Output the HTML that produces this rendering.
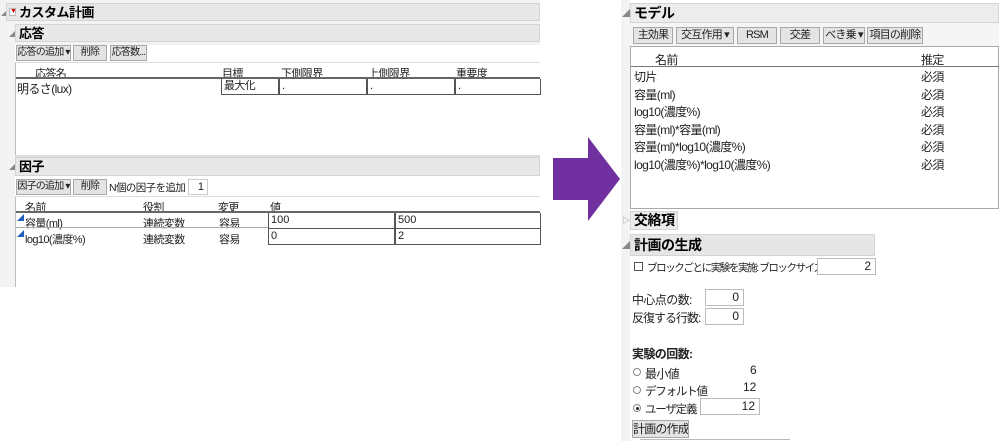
<!DOCTYPE html>
<html><head><meta charset="utf-8"><style>
*{margin:0;padding:0;box-sizing:border-box}
body{width:999px;height:441px;background:#fff;position:relative;overflow:hidden;font-family:"Liberation Sans","Noto Sans CJK JP",sans-serif;font-size:11px;color:#222}
div{white-space:nowrap}
.a{position:absolute;white-space:nowrap}
.hdr{position:absolute;background:#e8e8e8;border:1px solid #d4d4d4;font-weight:bold;font-size:13px;padding-left:3px;line-height:17px;color:#000;letter-spacing:-0.5px}
.btn{position:absolute;background:#e4e4e4;border:1px solid #a8a8a8;font-size:10px;line-height:14px;text-align:center;color:#222;letter-spacing:-0.8px;overflow:hidden}
.box{position:absolute;background:#fff;border:1px solid #999}
.tri{position:absolute;font-size:8px;color:#888}
.ln{position:absolute;height:2px;background:#666}
.cell{position:absolute;border:1px solid #555;border-top:none;height:16px;padding-left:2px;line-height:15px}
.c{letter-spacing:-0.6px}
</style></head><body>
<!-- LEFT -->
<div class="a" style="left:0;top:0;width:540px;height:287px;background:#f3f3f3"></div>
<div class="a" style="left:15px;top:45px;width:525px;height:242px;background:#fff"></div>
<div class="tri" style="left:1px;top:7px">◢</div>
<div class="hdr" style="left:6px;top:3px;width:534px;height:18px;padding-left:12px">カスタム計画</div>
<div class="a" style="left:9px;top:8px;width:7px;height:8px;background:#fff;border:1px solid #bbb"></div>
<div class="a" style="left:10px;top:8px;font-size:7px;color:#d00">▼</div>
<div class="tri" style="left:9px;top:28px">◢</div>
<div class="hdr" style="left:15px;top:24px;width:525px;height:18px">応答</div>
<div class="btn" style="left:16px;top:45px;width:55px;height:16px">応答の追加 ▾</div>
<div class="btn" style="left:73px;top:45px;width:34px;height:16px">削除</div>
<div class="btn" style="left:110px;top:45px;width:37px;height:16px">応答数...</div>
<div class="a" style="left:15px;top:62px;width:1px;height:94px;background:#bbb"></div>
<div class="a" style="left:15px;top:62px;width:525px;height:1px;background:#ddd"></div>
<div class="a c" style="left:35px;top:65px">応答名</div>
<div class="a c" style="left:222px;top:65px">目標</div>
<div class="a c" style="left:281px;top:65px">下側限界</div>
<div class="a c" style="left:368px;top:65px">上側限界</div>
<div class="a c" style="left:456px;top:65px">重要度</div>
<div class="ln" style="left:16px;top:77px;width:524px"></div>
<div class="a c" style="left:17px;top:80px;font-size:12px">明るさ(lux)</div>
<div class="cell c" style="left:221px;top:79px;width:58px">最大化</div>
<div class="cell" style="left:279px;top:79px;width:88px">.</div>
<div class="cell" style="left:367px;top:79px;width:88px">.</div>
<div class="cell" style="left:455px;top:79px;width:86px">.</div>
<div class="a" style="left:15px;top:155px;width:525px;height:2px;background:#ddd"></div>
<div class="tri" style="left:9px;top:161px">◢</div>
<div class="hdr" style="left:15px;top:157px;width:525px;height:19px">因子</div>
<div class="btn" style="left:16px;top:179px;width:55px;height:16px">因子の追加 ▾</div>
<div class="btn" style="left:73px;top:179px;width:34px;height:16px">削除</div>
<div class="a c" style="left:109px;top:180px;font-size:10.5px">N個の因子を追加</div>
<div class="box" style="left:188px;top:179px;width:20px;height:16px;text-align:right;padding-right:3px;line-height:14px;border-color:#ccc">1</div>
<div class="a" style="left:15px;top:196px;width:1px;height:91px;background:#bbb"></div>
<div class="a" style="left:15px;top:196px;width:525px;height:1px;background:#ddd"></div>
<div class="a c" style="left:25px;top:199px">名前</div>
<div class="a c" style="left:143px;top:199px">役割</div>
<div class="a c" style="left:218px;top:199px">変更</div>
<div class="a c" style="left:270px;top:199px">値</div>
<div class="ln" style="left:16px;top:211px;width:524px"></div>
<div class="a" style="left:17px;top:213px;font-size:7px;color:#2060c0">◢</div>
<div class="a c" style="left:25px;top:215px">容量(ml)</div>
<div class="a c" style="left:143px;top:215px">連続変数</div>
<div class="a c" style="left:219px;top:215px">容易</div>
<div class="cell" style="left:268px;top:213px;width:127px">100</div>
<div class="cell" style="left:395px;top:213px;width:146px">500</div>
<div class="a" style="left:16px;top:227px;width:252px;height:1px;background:#aaa"></div>
<div class="a" style="left:17px;top:229px;font-size:7px;color:#2060c0">◢</div>
<div class="a c" style="left:25px;top:231px">log10(濃度%)</div>
<div class="a c" style="left:143px;top:231px">連続変数</div>
<div class="a c" style="left:219px;top:231px">容易</div>
<div class="cell" style="left:268px;top:229px;width:127px">0</div>
<div class="cell" style="left:395px;top:229px;width:146px">2</div>

<!-- ARROW -->
<svg class="a" style="left:550px;top:135px" width="75" height="90"><polygon points="3,23 38,23 38,2 70,44 38,86 38,65 3,65" fill="#7030a0"/></svg>

<!-- RIGHT -->
<div class="a" style="left:621px;top:0;width:9px;height:441px;background:#f3f3f3"></div>
<div class="tri" style="left:622px;top:8px">◢</div>
<div class="hdr" style="left:630px;top:3px;width:369px;height:20px;font-size:14px;line-height:18px;background:#ececec">モデル</div>
<div class="a" style="left:630px;top:23px;width:369px;height:23px;background:#f5f5f5"></div>
<div class="btn" style="left:633px;top:27px;width:40px;height:17px;font-size:11px">主効果</div>
<div class="btn" style="left:676px;top:27px;width:58px;height:17px;font-size:11px">交互作用 ▾</div>
<div class="btn" style="left:737px;top:27px;width:40px;height:17px;font-size:11px">RSM</div>
<div class="btn" style="left:780px;top:27px;width:40px;height:17px;font-size:11px">交差</div>
<div class="btn" style="left:823px;top:27px;width:42px;height:17px;font-size:11px">べき乗 ▾</div>
<div class="btn" style="left:867px;top:27px;width:56px;height:17px;font-size:11px">項目の削除</div>
<div class="box" style="left:630px;top:46px;width:369px;height:163px;border-color:#aaa"></div>
<div class="a c" style="left:655px;top:51px;font-size:12px">名前</div>
<div class="a c" style="left:921px;top:51px;font-size:12px">推定</div>
<div class="ln" style="left:631px;top:66px;width:368px;height:1px;background:#777"></div>
<div class="a c" style="left:634px;top:69px;font-size:12px;line-height:17.6px">切片<br>容量(ml)<br>log10(濃度%)<br>容量(ml)*容量(ml)<br>容量(ml)*log10(濃度%)<br>log10(濃度%)*log10(濃度%)</div>
<div class="a c" style="left:921px;top:69px;font-size:12px;line-height:17.6px">必須<br>必須<br>必須<br>必須<br>必須<br>必須</div>
<div class="tri" style="left:622px;top:215px">▷</div>
<div class="hdr" style="left:630px;top:211px;width:48px;height:19px;font-size:14px;background:#ececec">交絡項</div>
<div class="tri" style="left:622px;top:240px">◢</div>
<div class="hdr" style="left:630px;top:234px;width:245px;height:22px;font-size:14px;line-height:20px;background:#e6e6e6">計画の生成</div>
<div class="a" style="left:634px;top:262px;width:9px;height:9px;border:1px solid #555;background:#fff"></div>
<div class="a" style="left:647px;top:260px;font-size:10.5px;letter-spacing:-1.4px">ブロックごとに実験を実施: ブロックサイズ</div>
<div class="box" style="left:817px;top:258px;width:59px;height:17px;text-align:right;padding-right:4px;font-size:12px;line-height:15px;border-color:#bbb">2</div>
<div class="a c" style="left:632px;top:291px;font-size:12px">中心点の数:</div>
<div class="box" style="left:705px;top:289px;width:39px;height:17px;text-align:right;padding-right:4px;font-size:12px;line-height:15px;border-color:#bbb">0</div>
<div class="a" style="left:632px;top:309px;font-size:12px;letter-spacing:-1px">反復する行数:</div>
<div class="box" style="left:705px;top:308px;width:39px;height:17px;text-align:right;padding-right:4px;font-size:12px;line-height:15px;border-color:#bbb">0</div>
<div class="a c" style="left:632px;top:345px;font-size:12px;font-weight:bold">実験の回数:</div>
<div class="a" style="left:633px;top:368px;width:8px;height:8px;border:1px solid #888;border-radius:50%;background:#fff"></div>
<div class="a c" style="left:645px;top:365px;font-size:12px">最小値</div>
<div class="a" style="left:750px;top:363px;font-size:12px">6</div>
<div class="a" style="left:633px;top:386px;width:8px;height:8px;border:1px solid #888;border-radius:50%;background:#fff"></div>
<div class="a" style="left:645px;top:383px;font-size:11.5px;letter-spacing:-1.2px">デフォルト値</div>
<div class="a" style="left:743px;top:380px;font-size:12px">12</div>
<div class="a" style="left:633px;top:404px;width:8px;height:8px;border:1px solid #888;border-radius:50%;background:#fff"></div>
<div class="a" style="left:636px;top:407px;width:3px;height:3px;border-radius:50%;background:#222"></div>
<div class="a" style="left:645px;top:401px;font-size:11.5px;letter-spacing:-1.2px">ユーザ定義</div>
<div class="box" style="left:700px;top:398px;width:60px;height:17px;text-align:right;padding-right:4px;font-size:12px;line-height:15px;border-color:#bbb">12</div>
<div class="btn" style="left:632px;top:420px;width:57px;height:18px;font-size:12px;line-height:16px">計画の作成</div>
<div class="a" style="left:640px;top:439px;width:150px;height:1px;background:#bbb"></div>
</body></html>
